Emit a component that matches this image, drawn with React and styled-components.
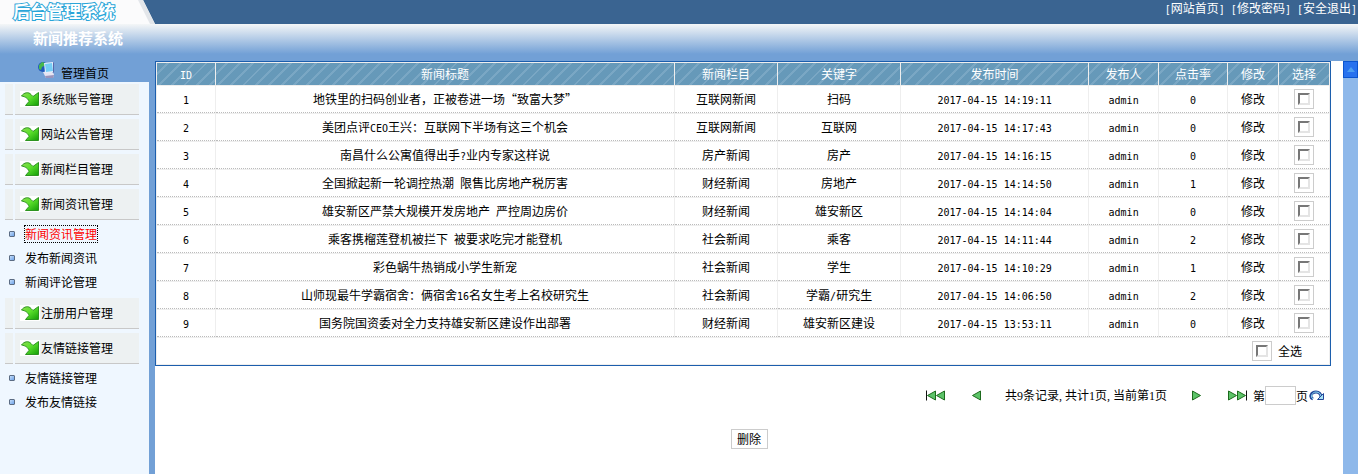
import React, { useState } from "react"
import styled, { createGlobalStyle } from "styled-components"

const topLinks = ["网站首页", "修改密码", "安全退出"]

const menu = [
  { name: "系统账号管理" },
  { name: "网站公告管理" },
  { name: "新闻栏目管理" },
  {
    name: "新闻资讯管理",
    items: ["新闻资讯管理", "发布新闻资讯", "新闻评论管理"],
  },
  { name: "注册用户管理" },
  { name: "友情链接管理", items: ["友情链接管理", "发布友情链接"] },
]

const columns = [
  { name: "ID", width: 58 },
  { name: "新闻标题" },
  { name: "新闻栏目", width: 102 },
  { name: "关键字", width: 122 },
  { name: "发布时间", width: 187 },
  { name: "发布人", width: 69 },
  { name: "点击率", width: 68 },
  { name: "修改", width: 50 },
  { name: "选择", width: 50 },
]

const news = [
  { id: 1, title: "地铁里的扫码创业者，正被卷进一场“致富大梦”", category: "互联网新闻", keyword: "扫码", date: "2017-04-15 14:19:11", clicks: 0 },
  { id: 2, title: "美团点评CEO王兴：互联网下半场有这三个机会", category: "互联网新闻", keyword: "互联网", date: "2017-04-15 14:17:43", clicks: 0 },
  { id: 3, title: "南昌什么公寓值得出手?业内专家这样说", category: "房产新闻", keyword: "房产", date: "2017-04-15 14:16:15", clicks: 0 },
  { id: 4, title: "全国掀起新一轮调控热潮 限售比房地产税厉害", category: "财经新闻", keyword: "房地产", date: "2017-04-15 14:14:50", clicks: 1 },
  { id: 5, title: "雄安新区严禁大规模开发房地产 严控周边房价", category: "财经新闻", keyword: "雄安新区", date: "2017-04-15 14:14:04", clicks: 0 },
  { id: 6, title: "乘客携榴莲登机被拦下 被要求吃完才能登机", category: "社会新闻", keyword: "乘客", date: "2017-04-15 14:11:44", clicks: 2 },
  { id: 7, title: "彩色蜗牛热销成小学生新宠", category: "社会新闻", keyword: "学生", date: "2017-04-15 14:10:29", clicks: 1 },
  { id: 8, title: "山师现最牛学霸宿舍：俩宿舍16名女生考上名校研究生", category: "社会新闻", keyword: "学霸/研究生", date: "2017-04-15 14:06:50", clicks: 2 },
  { id: 9, title: "国务院国资委对全力支持雄安新区建设作出部署", category: "财经新闻", keyword: "雄安新区建设", date: "2017-04-15 13:53:11", clicks: 0 },
]

export default function App() {
  const [checked, setChecked] = useState([])
  const [page, setPage] = useState("")

  const toggle = id =>
    setChecked(list =>
      list.includes(id) ? list.filter(item => item !== id) : [...list, id]
    )
  const toggleAll = e =>
    setChecked(e.target.checked ? news.map(({ id }) => id) : [])

  return (
    <Page lang="zh-CN">
      <GlobalStyle />
      <TopBar>
        <Logo>
          <LogoShape />
          <LogoText>后台管理系统</LogoText>
        </Logo>
        <TopNav>
          {topLinks.map(name => (
            <TopLink href="#" key={name}>
              <Latin>[</Latin>
              {name}
              <Latin>]</Latin>
            </TopLink>
          ))}
        </TopNav>
      </TopBar>
      <Banner>
        <SystemName>新闻推荐系统</SystemName>
      </Banner>
      <Body>
        <Sidebar>
          <Home href="#">
            <HomeIcon />
            管理首页
          </Home>
          <Menu>
            {menu.map(({ name, items }, index) => (
              <React.Fragment key={name}>
                <MenuHead>
                  <MenuStub />
                  <MenuTitle href="#">
                    <ArrowIcon />
                    {name}
                  </MenuTitle>
                </MenuHead>
                {items && (
                  <SubMenu>
                    {items.map((item, i) => (
                      <SubItem key={item}>
                        <Bullet />
                        <SubLink href="#" $active={index === 3 && i === 0}>
                          {item}
                        </SubLink>
                      </SubItem>
                    ))}
                  </SubMenu>
                )}
              </React.Fragment>
            ))}
          </Menu>
        </Sidebar>
        <Content>
          <Table>
            <colgroup>
              {columns.map(({ name, width }) => (
                <col key={name} width={width} />
              ))}
            </colgroup>
            <thead>
              <tr>
                {columns.map(({ name }) => (
                  <Th key={name}>{mixed(name)}</Th>
                ))}
              </tr>
            </thead>
            <tbody>
              {news.map(({ id, title, category, keyword, date, clicks }) => (
                <tr key={id}>
                  <Td>{mixed(String(id))}</Td>
                  <Td>{mixed(title)}</Td>
                  <Td>{category}</Td>
                  <Td>{mixed(keyword)}</Td>
                  <Td>{mixed(date)}</Td>
                  <Td>{mixed("admin")}</Td>
                  <Td>{mixed(String(clicks))}</Td>
                  <Td>
                    <EditLink href="#">修改</EditLink>
                  </Td>
                  <Td>
                    <Checkbox
                      aria-label={`选择 ${title}`}
                      checked={checked.includes(id)}
                      onChange={() => toggle(id)}
                    />
                  </Td>
                </tr>
              ))}
              <tr>
                <FooterCell colSpan={columns.length}>
                  <SelectAll>
                    <Checkbox
                      checked={checked.length === news.length}
                      onChange={toggleAll}
                    />
                    <span>全选</span>
                  </SelectAll>
                </FooterCell>
              </tr>
            </tbody>
          </Table>
          <Pager>
            <PagerButton aria-label="首页" $gap={25}>
              <PagerIcon double />
            </PagerButton>
            <PagerButton aria-label="上一页" $gap={24}>
              <PagerIcon />
            </PagerButton>
            <PagerInfo>共9条记录, 共计1页, 当前第1页</PagerInfo>
            <PagerButton aria-label="下一页" $gap={25}>
              <PagerIcon flip />
            </PagerButton>
            <PagerButton aria-label="末页" $gap={6}>
              <PagerIcon double flip />
            </PagerButton>
            <PageLabel>
              第
              <PageInput
                type="text"
                value={page}
                onChange={e => setPage(e.target.value)}
              />
              页
            </PageLabel>
            <PagerButton aria-label="跳转" $gap={0}>
              <GoIcon />
            </PagerButton>
          </Pager>
          <Actions>
            <DeleteButton type="button">删除</DeleteButton>
          </Actions>
        </Content>
        <Scrollbar>
          <ScrollUp type="button" aria-label="向上滚动">
            <svg width="8" height="5" viewBox="0 0 8 5">
              <path d="M4 0L8 5H0z" fill="#4d9ff0" />
            </svg>
          </ScrollUp>
        </Scrollbar>
      </Body>
    </Page>
  )
}

// half-width runs are set in a narrower face than the hanzi around them
function mixed(text) {
  return text
    .split(/([\x20-\x7e]+)/)
    .filter(Boolean)
    .map((part, i) =>
      /^[\x20-\x7e]/.test(part) ? <Latin key={i}>{part}</Latin> : part
    )
}

function LogoShape() {
  return (
    <LogoSvg viewBox="0 0 155 24" preserveAspectRatio="none">
      <path d="M0 0H143L155 24H0z" fill="#fbfbfc" />
      <path d="M138 0H143L155 24H150z" fill="#e3e6ea" />
    </LogoSvg>
  )
}

function HomeIcon() {
  return (
    <svg width="18" height="18" viewBox="0 0 18 18">
      <path d="M5 11l7-2 4 4-1 4H8z" fill="#e6e4f2" />
      <path d="M8 17h7l1-3-9 1z" fill="#9a94bb" />
      <circle cx="5" cy="6" r="5" fill="#2059bc" />
      <path d="M1 4l3-3 3 1-1 3-2 1-1 3-2-1z" fill="#47b84c" />
      <path d="M6 2l9-1 1 10-9 1z" fill="#e4effb" />
      <path d="M7 3l7-1 1 8-7 1z" fill="#74cdf6" />
      <path d="M15 1l1 1v10l-1-1z" fill="#5c66a8" />
    </svg>
  )
}

function ArrowIcon() {
  return (
    <svg width="20" height="16" viewBox="0 0 20 16">
      <defs>
        <linearGradient id="leaf" x1="0" y1="0" x2="1" y2="1">
          <stop offset="0" stopColor="#8fdc50" />
          <stop offset="0.45" stopColor="#5be02c" />
          <stop offset="1" stopColor="#139c08" />
        </linearGradient>
      </defs>
      <rect width="20" height="16" fill="#fff" />
      <path
        d="M1.500 5C4 1.500 8.500 0.500 11 3.500L13 5.500L18.500 1.500V14.500H5.500L9 10.500C8.500 8 5.500 5.500 1.500 5z"
        fill="url(#leaf)"
        stroke="#2d9420"
      />
    </svg>
  )
}

function PagerIcon({ double, flip }) {
  const width = double ? 20 : 10
  return (
    <svg
      width={width}
      height="11"
      viewBox={`0 0 ${width} 11`}
      transform={flip ? "scale(-1 1)" : undefined}
    >
      {double && <path d="M0.500 0.500V10.500" stroke="#111" />}
      <path d="M9.500 1v9L1.500 5.500z" fill="#5cc468" stroke="#1d6a1d" />
      {double && (
        <path d="M18.500 1v9L10.500 5.500z" fill="#5cc468" stroke="#1d6a1d" />
      )}
    </svg>
  )
}

function GoIcon() {
  return (
    <svg width="16" height="12" viewBox="0 0 16 12">
      <path
        d="M4 9C0 7 2 2 7 2c3 0 5 2 5 5"
        fill="none"
        stroke="#24479a"
        strokeWidth="3"
      />
      <path d="M4 9C1 7 3 2 7 2c3 0 5 2 5 5" fill="none" stroke="#8edcf4" />
      <path d="M8.500 9.500H14.500V3.500z" fill="#a8e2f5" stroke="#24479a" />
    </svg>
  )
}

const GlobalStyle = createGlobalStyle`
  *, *::before {
    box-sizing: border-box;
  }

  body {
    margin: 0;
    color: #000;
    font: 12px/16px "Noto Sans CJK SC", sans-serif;
  }

  a {
    color: inherit;
    text-decoration: none;
  }

  svg {
    display: block;
    flex: none;
  }

  button, input {
    margin: 0;
    padding: 0;
    border: 0;
    border-radius: 0;
    background: none;
    font: inherit;
    color: inherit;
  }
`

const Page = styled.div`
  display: flex;
  flex-direction: column;
  min-height: 100vh;
`

const Latin = styled.span`
  font-family: "DejaVu Sans Mono", monospace;
  font-size: 10px;
  line-height: 1;
`

const TopBar = styled.header`
  display: flex;
  justify-content: space-between;
  height: 24px;
  background: #3a6491;
`

const Logo = styled.div`
  display: grid;
  width: 155px;

  & > * {
    grid-area: 1 / 1;
  }
`

const LogoSvg = styled.svg`
  width: 155px;
  height: 24px;
`

const LogoText = styled.h1`
  margin: 0;
  padding-left: 13px;
  font-size: 17px;
  line-height: 22px;
  font-weight: 700;
  color: #fff;
  -webkit-text-stroke: 2px #2aa5d8;
  paint-order: stroke fill;
`

const TopNav = styled.nav`
  display: flex;
  gap: 6px;
  padding-right: 1px;
  color: #fff;
`

const TopLink = styled.a`
  white-space: nowrap;
`

const Banner = styled.div`
  height: 37px;
  padding: 4px 33px;
  background: linear-gradient(#f4f6f7, #72a0d6 30px);
`

const SystemName = styled.h2`
  margin: 0;
  font-size: 15px;
  line-height: 20px;
  color: #fff;
`

const Body = styled.div`
  display: flex;
  flex: 1;
`

const Sidebar = styled.aside`
  display: flex;
  flex-direction: column;
  flex: none;
  width: 155px;
  padding-right: 6px;
  background: #72a0d6;
`

const Home = styled.a`
  display: flex;
  gap: 5px;
  height: 21px;
  padding-left: 38px;
  line-height: 24px;
`

const Menu = styled.nav`
  flex: 1;
  padding: 2px 10px 0 5px;
  background: #eff7ff;
`

const MenuHead = styled.div`
  display: flex;
  gap: 2px;
  height: 31px;
  margin-bottom: 4px;
`

const MenuStub = styled.span`
  width: 8px;
  background: #edf1f2;
  border-bottom: 1px solid #c8c8c8;
`

const MenuTitle = styled.a`
  display: flex;
  flex: 1;
  align-items: center;
  gap: 1px;
  padding-left: 5px;
  background: #edf1f2;
  border-bottom: 1px solid #c8c8c8;
`

const SubMenu = styled.ul`
  margin: -2px 0 4px;
  padding: 0 4px;
  list-style: none;
`

const SubItem = styled.li`
  display: flex;
  align-items: center;
  gap: 10px;
  height: 24px;
`

const Bullet = styled.span`
  width: 6px;
  height: 6px;
  border: 1px solid #5b6c84;
  border-radius: 1px;
  background: linear-gradient(135deg, #c5defa, #6da2e8);
`

const SubLink = styled.a`
  color: ${props => (props.$active ? "#f00" : "#000")};
  outline: ${props => (props.$active ? "1px dotted #000" : "none")};
`

const Content = styled.main`
  flex: 1;
  min-width: 0;
  background: #fff;
`

const Table = styled.table`
  width: 99%;
  table-layout: fixed;
  border: 1px solid #1c5ead;
  border-spacing: 1px;
  background: #eee;
`

const Th = styled.th`
  height: 22px;
  padding: 0;
  color: #fff;
  font-weight: 400;
  background: repeating-linear-gradient(
    135deg,
    #6699b9 0 7px,
    #7aa7c4 7px 9px
  );
`

const Td = styled.td`
  height: 27px;
  padding: 0 0 1px;
  text-align: center;
  background: #fff;
  border-bottom: 1px dotted #bbb;
`

const EditLink = styled.a`
  &:hover {
    text-decoration: underline;
  }
`

const FooterCell = styled.td`
  height: 26px;
  padding: 0 27px 0 0;
  background: #fff;
`

const SelectAll = styled.label`
  display: flex;
  align-items: center;
  justify-content: flex-end;
  gap: 6px;
`

const Checkbox = styled.input.attrs({ type: "checkbox" })`
  appearance: none;
  display: inline-block;
  width: 20px;
  height: 20px;
  padding: 3px;
  border: 1px solid #ccc;
  vertical-align: middle;

  &::before {
    content: "";
    display: block;
    width: 12px;
    height: 12px;
    border: 2px solid;
    border-color: #777 #e4e4e4 #e4e4e4 #777;
  }

  &:checked::before {
    background: #333;
  }
`

const Pager = styled.div`
  display: flex;
  align-items: center;
  justify-content: flex-end;
  padding: 20px 18px 0 0;
`

const PagerButton = styled.button`
  margin-right: ${props => props.$gap}px;
`

const PagerInfo = styled.span`
  margin-right: 25px;
  font-family: "Liberation Serif", "Noto Sans CJK SC", serif;
`

const PageLabel = styled.label`
  display: flex;
  align-items: center;
  margin-right: 1px;
`

const PageInput = styled.input`
  width: 31px;
  height: 19px;
  border: 1px solid #ccc;
`

const Actions = styled.div`
  display: flex;
  justify-content: center;
  padding-top: 24px;
`

const DeleteButton = styled.button`
  width: 37px;
  height: 20px;
  line-height: 16px;
  border: 1px solid #ccc;
`

const Scrollbar = styled.div`
  flex: none;
  width: 15px;
  background: #8eb8ea;
`

const ScrollUp = styled.button`
  display: flex;
  align-items: center;
  justify-content: center;
  width: 15px;
  height: 17px;
  background: #2872ee;
  border: 1px solid #0b55cf;
`
